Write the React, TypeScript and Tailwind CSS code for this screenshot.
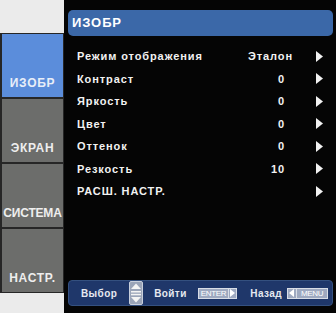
import React from "react";

const rows = [
  { label: "Режим отображения", value: "Эталон", num: false },
  { label: "Контраст", value: "0", num: true },
  { label: "Яркость", value: "0", num: true },
  { label: "Цвет", value: "0", num: true },
  { label: "Оттенок", value: "0", num: true },
  { label: "Резкость", value: "10", num: true },
  { label: "РАСШ. НАСТР.", value: "", num: false },
];

const tabs = [
  { name: "ИЗОБР", active: true },
  { name: "ЭКРАН", active: false },
  { name: "СИСТЕМА", active: false },
  { name: "НАСТР.", active: false },
];

function Arrow() {
  return (
    <svg width="7" height="11" viewBox="0 0 7 11">
      <path d="M0 0 L7 5.5 L0 11 Z" fill="#f2f2f2" />
    </svg>
  );
}

function UpDown() {
  return (
    <svg width="14" height="24" viewBox="0 0 14 24">
      <rect x="0.5" y="0.5" width="13" height="23" rx="1.5" fill="#9aa4b8" stroke="#c8cfdc" />
      <path d="M7 2.5 L12 8 L2 8 Z" fill="#f4f4f4" />
      <rect x="2" y="10" width="10" height="1.5" fill="#f4f4f4" />
      <rect x="2" y="12.8" width="10" height="1.5" fill="#f4f4f4" />
      <path d="M7 21.5 L12 16 L2 16 Z" fill="#f4f4f4" />
    </svg>
  );
}

export default function App() {
  return (
    <div
      className="w-[336px] h-[313px] bg-[#ebebeb] flex overflow-hidden"
      style={{ fontFamily: '"Liberation Sans", Arial, sans-serif' }}
    >
      {/* Left tabs */}
      <div className="w-[64px] pt-[33px] shrink-0">
        <div className="h-[260px] bg-[#262626] flex flex-col gap-[2px] py-[1px] pl-[2px] pr-[1px]">
          {tabs.map((t) => (
            <div
              key={t.name}
              className={`flex-1 flex items-end justify-center pb-[5px] text-[12px] font-bold whitespace-nowrap ${
                t.name === "СИСТЕМА" ? "tracking-[-0.2px]" : "tracking-[0.7px]"
              } ${t.active ? "bg-[#5b8ddb] text-[#e8eef8]" : "bg-[#6c6d6b] text-[#eeeeee]"}`}
            >
              {t.name}
            </div>
          ))}
        </div>
      </div>

      {/* Main panel */}
      <div className="w-[272px] h-full bg-[#050505] flex flex-col pt-[10px] pl-[4px] pr-[3px]">
        <div className="h-[26px] bg-[#3b68a8] rounded-[5px] flex items-center pl-[4px] text-[13px] font-bold text-white tracking-[0.9px]">
          ИЗОБР
        </div>

        <div className="flex flex-col mt-[9px]">
          {rows.map((r) => (
            <div key={r.label} className="h-[22.5px] flex items-center text-[11px] font-bold text-[#f2f2f2] tracking-[0.9px]">
              <span className="pl-[9px] flex-1">{r.label}</span>
              <span className={`text-right ${r.num ? "pr-[8px]" : ""}`}>{r.value}</span>
              <span className="w-[40px] flex justify-end pr-[10px]">
                <Arrow />
              </span>
            </div>
          ))}
        </div>

        <div className="mt-auto mb-[7px] h-[26px] bg-[#1f376a] border border-[#34507f] rounded-[4px] flex items-center pl-[12px] text-[10px] font-bold text-[#e6e9f0] tracking-[0.4px]">
          <span>Выбор</span>
          <span className="ml-[12px]">
            <UpDown />
          </span>
          <span className="ml-[11px]">Войти</span>
          <span className="ml-[11px] h-[11px] flex items-stretch border border-[#d8dde6] bg-[#9ea9c0]">
            <span className="px-[2px] text-[8px] leading-[10px] text-white tracking-[-0.3px] font-normal">ENTER</span>
            <span className="w-[8px] border-l border-[#d8dde6] flex items-center justify-center">
              <svg width="5" height="8" viewBox="0 0 5 8">
                <path d="M0 0 L5 4 L0 8 Z" fill="#fff" />
              </svg>
            </span>
          </span>
          <span className="ml-[13px]">Назад</span>
          <span className="ml-[5px] h-[11px] flex items-stretch border border-[#d8dde6] bg-[#9ea9c0]">
            <span className="w-[9px] border-r border-[#d8dde6] flex items-center justify-center">
              <svg width="5" height="8" viewBox="0 0 5 8">
                <path d="M5 0 L0 4 L5 8 Z" fill="#fff" />
              </svg>
            </span>
            <span className="px-[4px] text-[8px] leading-[10px] text-white tracking-[-0.3px] font-normal">MENU</span>
          </span>
        </div>
      </div>
    </div>
  );
}
